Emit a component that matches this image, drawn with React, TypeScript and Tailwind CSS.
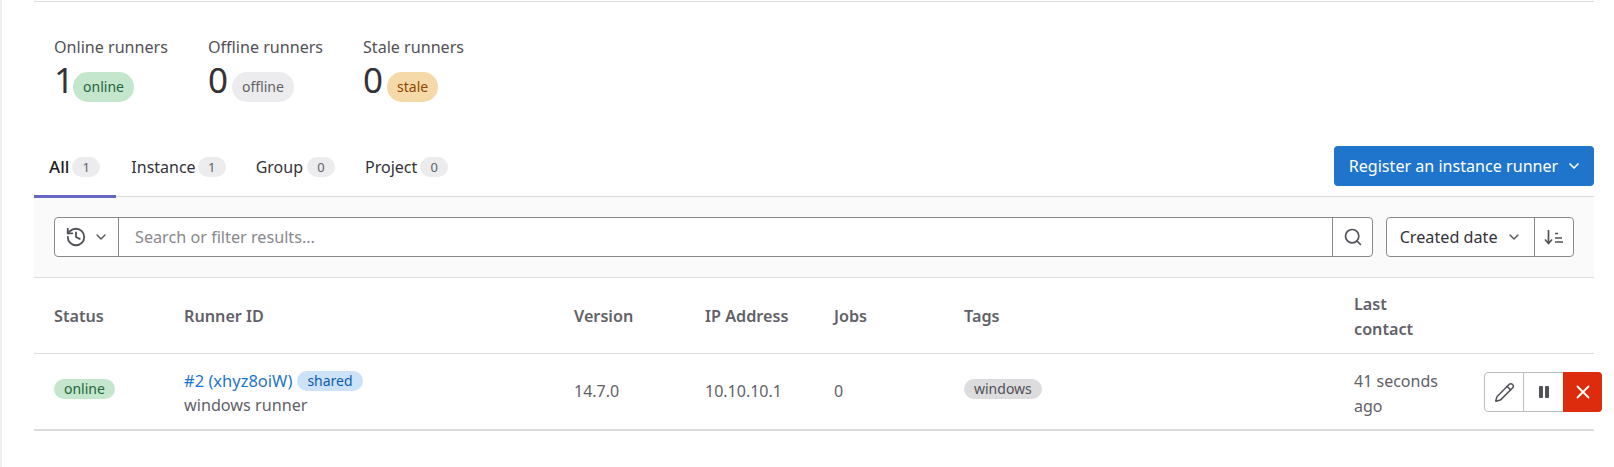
import { ChevronDown, History, Pencil, Search, X } from "lucide-react";

const Stat = ({ label, n, badge, cls, w, ml }: { label: string; n: string; badge: string; cls: string; w: string; ml: string }) => (
  <div className={w}>
    <div className="text-[16.1px] leading-[25px] text-[#535158]">{label}</div>
    <div className="-mt-px flex items-start h-[42px]">
      <span className="text-[35px] leading-[42px] text-[#333238]">{n}</span>
      <span className={`${ml} mt-[13px] h-[30px] rounded-full px-[10px] text-[14px] leading-[30px] ${cls}`}>{badge}</span>
    </div>
  </div>
);

const Tab = ({ label, n, active, gap }: { label: string; n: string; active?: boolean; gap: string }) => (
  <div className={`flex items-center h-[50px] pl-[15px] -mb-px pb-[10px] border-b-[3px] ${gap} ${active ? "pr-[16px] border-[#6666c4] text-[#1f1e24] font-medium" : "pr-[15px] border-transparent text-[#333238]"}`}>
    <span className={active ? "text-[17px]" : "text-[16px]"}>{label}</span>
    <span className="h-[20px] w-[28px] rounded-full bg-[#ececef] text-center text-[13px] leading-[20px] font-normal text-[#626168]">{n}</span>
  </div>
);

const Pill = ({ children, cls }: { children: string; cls: string }) => (
  <span className={`inline-block h-[20px] rounded-full px-[10px] text-[14px] leading-[20px] ${cls}`}>{children}</span>
);

export default function App() {
  return (
    <div className="h-[467px] overflow-hidden border-l-2 border-[#f0f0f0] bg-white pl-[32px] pr-[20px] pt-px font-['Noto_Sans',sans-serif]">
      <div className="border-t border-[#dcdcde] pl-[20px] pt-[33px] flex h-[138px]">
        <Stat label="Online runners" n="1" badge="online" cls="bg-[#c3e6cd] text-[#24663b]" w="w-[154px]" ml="-ml-px" />
        <Stat label="Offline runners" n="0" badge="offline" cls="bg-[#ececef] text-[#626168]" w="w-[155px]" ml="ml-[4px]" />
        <Stat label="Stale runners" n="0" badge="stale" cls="bg-[#f5d9a8] text-[#8f4700]" w="w-[150px]" ml="ml-[4px]" />
      </div>
      <div className="flex items-start justify-between h-[58px] border-b border-[#dcdcde]">
        <div className="flex pt-[9px]">
          <Tab label="All" n="1" active gap="gap-[3px]" />
          <Tab label="Instance" n="1" gap="gap-[2px]" />
          <Tab label="Group" n="0" gap="gap-[4px]" />
          <Tab label="Project" n="0" gap="gap-[3px]" />
        </div>
        <button className="mt-[7px] flex h-[40px] w-[260px] items-center justify-center gap-[8px] rounded-[4px] bg-[#1f75cb] pl-[3px] text-[16.1px] text-white">
          Register an instance runner
          <ChevronDown size={16} strokeWidth={2.5} />
        </button>
      </div>
      <div className="flex items-center gap-[13px] h-[81px] border-b border-[#dcdcde] px-[20px] bg-[#fafafa]">
        <div className="flex h-[40px] w-[1320px] rounded-[4px] border border-[#89888d] bg-white">
          <div className="flex w-[64px] items-center justify-center gap-[6px] border-r border-[#89888d] text-[#535158]">
            <History size={22} strokeWidth={2} />
            <ChevronDown size={16} strokeWidth={2} />
          </div>
          <div className="flex-1 pl-[16px] text-[16.2px] leading-[38px] text-[#89888d]">Search or filter results...</div>
          <div className="flex w-[40px] items-center justify-center border-l border-[#89888d] text-[#535158]">
            <Search size={20} strokeWidth={2} />
          </div>
        </div>
        <div className="flex h-[40px] w-[188px] rounded-[4px] border border-[#89888d] bg-white">
          <div className="flex w-[148px] items-center justify-center gap-[8px] border-r border-[#89888d] text-[16.2px] text-[#333238]">
            Created date
            <ChevronDown size={16} strokeWidth={2} className="text-[#535158]" />
          </div>
          <div className="flex flex-1 items-center justify-center text-[#535158]">
            <svg width="22" height="20" viewBox="0 0 22 20" fill="none" stroke="currentColor" strokeWidth="1.7">
              <path d="M5.5 3v13.5M2 12.5l3.500 4 3.500-4" />
              <path d="M12 6.500h3M12 11h7M12 15h8" />
            </svg>
          </div>
        </div>
      </div>
      <table className="w-full table-fixed border-collapse">
        <thead>
          <tr className="h-[75px] border-b border-[#dcdcde] text-left text-[16.2px] leading-[25px] font-semibold text-[#626168]">
            <th className="w-[130px] pl-[20px] pt-[3px] font-semibold">Status</th>
            <th className="w-[390px] pl-[20px] pt-[3px] font-semibold">Runner ID</th>
            <th className="w-[131px] pl-[20px] pt-[3px] font-semibold">Version</th>
            <th className="w-[129px] pl-[20px] pt-[3px] font-semibold">IP Address</th>
            <th className="w-[130px] pl-[20px] pt-[3px] font-semibold">Jobs</th>
            <th className="w-[390px] pl-[20px] pt-[3px] font-semibold">Tags</th>
            <th className="pl-[20px] pt-[3px] font-semibold">
              <div className="w-[90px]">Last contact</div>
            </th>
          </tr>
        </thead>
        <tbody>
          <tr className="h-[77px] border-b-2 border-[#dcdcde] text-[16px] leading-[25px] text-[#626168]">
            <td className="pl-[20px] pb-[6px]">
              <Pill cls="bg-[#c3e6cd] text-[#24663b]">online</Pill>
            </td>
            <td className="pl-[20px] pt-[4px]">
              <div className="flex items-center gap-[5px]">
                <span className="text-[16.5px] text-[#1f75cb]">#2 (xhyz8oiW)</span>
                <Pill cls="bg-[#cbe2f9] text-[#0b5cad]">shared</Pill>
              </div>
              <div className="text-[16.2px]">windows runner</div>
            </td>
            <td className="pl-[20px]">14.7.0</td>
            <td className="pl-[20px]">10.10.10.1</td>
            <td className="pl-[20px]">0</td>
            <td className="pl-[20px] pb-[6px]">
              <Pill cls="bg-[#dcdcde] text-[#535158]">windows</Pill>
            </td>
            <td className="pl-[20px] pt-[2px]">
              <div className="flex items-center">
                <div className="w-[130px] shrink-0 pr-[30px] pt-[4px]">41 seconds ago</div>
                <div className="flex h-[40px] w-[118px] shrink-0 rounded-[4px] border border-[#bfbfc3] bg-white">
                  <div className="flex w-[39px] items-center justify-center border-r border-[#bfbfc3] text-[#535158]">
                    <Pencil size={21} strokeWidth={1.7} />
                  </div>
                  <div className="flex w-[39px] items-center justify-center text-[#535158]">
                    <svg width="16" height="16" viewBox="0 0 16 16" fill="currentColor">
                      <rect x="3" y="2" width="4" height="12" rx="1" />
                      <rect x="9" y="2" width="4" height="12" rx="1" />
                    </svg>
                  </div>
                  <div className="-my-px -mr-px flex flex-1 items-center justify-center rounded-r-[4px] bg-[#dd2b0e] text-white">
                    <X size={22} strokeWidth={2} />
                  </div>
                </div>
              </div>
            </td>
          </tr>
        </tbody>
      </table>
    </div>
  );
}
